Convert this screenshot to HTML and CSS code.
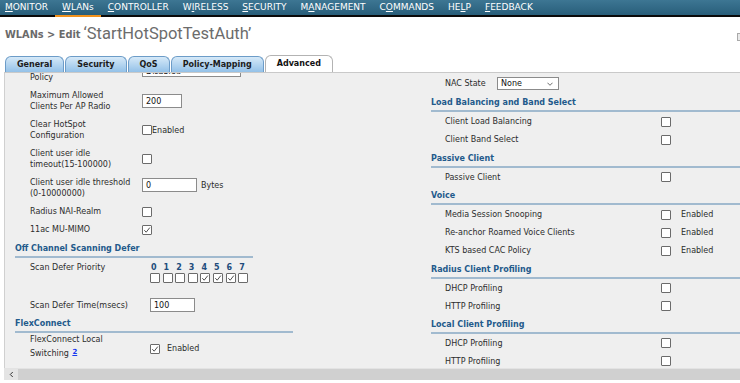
FILE: index.html
```html
<!DOCTYPE HTML>
<html>
<head>
<meta charset="utf-8" />
<title>WLANs &gt; Edit</title>
<link rel="stylesheet" href="styles.css">
</head>

<body>
<div class="nav">
	<span class="item first"><u>M</u>ONITOR</span>
	<span class="item on"><u>W</u>LANs</span>
	<span class="item"><u>C</u>ONTROLLER</span>
	<span class="item">W<u>I</u>RELESS</span>
	<span class="item"><u>S</u>ECURITY</span>
	<span class="item">M<u>A</u>NAGEMENT</span>
	<span class="item">C<u>O</u>MMANDS</span>
	<span class="item">HE<u>L</u>P</span>
	<span class="item"><u>F</u>EEDBACK</span>
</div>

<div class="head">
	<span class="crumb">WLANs &gt; Edit</span>
	<span class="name">‘StartHotSpotTestAuth’</span>
	<span class="back"></span>
</div>

<div class="tabs">
	<span class="tab">General</span>
	<span class="tab">Security</span>
	<span class="tab">QoS</span>
	<span class="tab">Policy-Mapping</span>
	<span class="tab on">Advanced</span>
</div>

<div class="panel">
	<div class="col left">
		<div class="row">
			<span class="lbl">Policy</span>
			<span class="box sel w99 top">Disabled</span>
		</div>
		<div class="row">
			<span class="lbl">Maximum Allowed<br>Clients Per AP Radio</span>
			<span class="box w40">200</span>
		</div>
		<div class="row">
			<span class="lbl">Clear HotSpot<br>Configuration</span>
			<span class="cb"></span><span>Enabled</span>
		</div>
		<div class="row">
			<span class="lbl">Client user idle<br>timeout(15-100000)</span>
			<span class="cb"></span>
		</div>
		<div class="row">
			<span class="lbl">Client user idle threshold<br>(0-10000000)</span>
			<span class="pair">
				<span class="box w55">0</span><span class="unit">Bytes</span>
			</span>
		</div>
		<div class="row">
			<span class="lbl">Radius NAI-Realm</span>
			<span class="cb"></span>
		</div>
		<div class="row">
			<span class="lbl">11ac MU-MIMO</span>
			<span class="cb on"><svg viewBox="0 0 8 8"><polyline points="1.3,4.2 3.2,6.2 6.8,1.6"/></svg></span>
		</div>

		<div class="sec short">Off Channel Scanning Defer</div>
		<div class="row prio-row">
			<span class="lbl wide">Scan Defer Priority</span>
			<div class="prio">
				<b>0</b><b>1</b><b>2</b><b>3</b><b>4</b><b>5</b><b>6</b><b>7</b>
				<span class="cb"></span>
				<span class="cb"></span>
				<span class="cb"></span>
				<span class="cb"></span>
				<span class="cb on"><svg viewBox="0 0 8 8"><polyline points="1.3,4.2 3.2,6.2 6.8,1.6"/></svg></span>
				<span class="cb on"><svg viewBox="0 0 8 8"><polyline points="1.3,4.2 3.2,6.2 6.8,1.6"/></svg></span>
				<span class="cb on"><svg viewBox="0 0 8 8"><polyline points="1.3,4.2 3.2,6.2 6.8,1.6"/></svg></span>
				<span class="cb"></span>
			</div>
		</div>
		<div class="row spaced">
			<span class="lbl wide">Scan Defer Time(msecs)</span>
			<span class="box w45">100</span>
		</div>

		<div class="sec flex">FlexConnect</div>
		<div class="row tall">
			<span class="lbl wide">FlexConnect Local<br>Switching <a class="note">2</a></span>
			<span class="cb on"><svg viewBox="0 0 8 8"><polyline points="1.3,4.2 3.2,6.2 6.8,1.6"/></svg></span>
			<span class="en">Enabled</span>
		</div>
	</div>

	<div class="col right">
		<div class="row">
			<span class="lbl nac">NAC State</span>
			<span class="box sel w62">None<svg viewBox="0 0 7 4"><polyline points="0.5,0.5 3.5,3.5 6.5,0.5"/></svg></span>
		</div>

		<div class="sec">Load Balancing and Band Select</div>
		<div class="row"><span class="lbl">Client Load Balancing</span><span class="cb"></span></div>
		<div class="row"><span class="lbl">Client Band Select</span><span class="cb"></span></div>

		<div class="sec">Passive Client</div>
		<div class="row"><span class="lbl">Passive Client</span><span class="cb"></span></div>

		<div class="sec">Voice</div>
		<div class="row"><span class="lbl">Media Session Snooping</span><span class="cb"></span><span class="en">Enabled</span></div>
		<div class="row"><span class="lbl">Re-anchor Roamed Voice Clients</span><span class="cb"></span><span class="en">Enabled</span></div>
		<div class="row"><span class="lbl">KTS based CAC Policy</span><span class="cb"></span><span class="en">Enabled</span></div>

		<div class="sec">Radius Client Profiling</div>
		<div class="row"><span class="lbl">DHCP Profiling</span><span class="cb"></span></div>
		<div class="row"><span class="lbl">HTTP Profiling</span><span class="cb"></span></div>

		<div class="sec">Local Client Profiling</div>
		<div class="row"><span class="lbl">DHCP Profiling</span><span class="cb"></span></div>
		<div class="row"><span class="lbl">HTTP Profiling</span><span class="cb"></span></div>
	</div>
</div>

<div class="hbar"><span class="arr"><svg viewBox="0 0 6 8"><polyline points="4.5,1 1.5,4 4.5,7"/></svg></span></div>
</body>
</html>
```

FILE: styles.css
```css
* { box-sizing: border-box; }
body { margin: 0; overflow: hidden; background: #fff; font: 8px/11px "DejaVu Sans", Verdana, sans-serif; color: #2c2c2c; }

/* top menu */
.nav { display: flex; height: 17px; background: linear-gradient(#3d7693, #285e7a); border-bottom: 2px solid #0a0a0a; font-size: 9px; line-height: 15px; color: #fff; }
	.nav .item { height: 17px; padding: 0 7px; border-bottom: 2px solid transparent; white-space: nowrap; }
	.nav .first { margin-left: -2px; }
	.nav .on { border-bottom-color: #f2921c; }

/* page title */
.head { display: flex; align-items: center; height: 34px; padding-left: 5px; color: #6a6a6a; white-space: nowrap; }
	.head .crumb { margin-right: 3px; font-size: 9.8px; font-weight: bold; }
	.head .name { font-family: Roboto, "Liberation Sans", Arial, sans-serif; font-size: 16.5px; line-height: 18px; color: #6c6c6c; }
	.head .back { align-self: flex-start; margin: 16px -40px 0 auto; width: 43px; height: 8px; border: 1px solid #a9a9a9; background: #e9e9e9; }

/* tabs */
.tabs { display: flex; align-items: flex-end; gap: 1px; height: 21px; padding-left: 5px; }
	.tabs .tab { height: 16px; padding: 0 11px; border: 1px solid #6c9cc8; border-bottom: 0; border-radius: 6px 6px 0 0; background: linear-gradient(#d6e9f8, #93c1e8); font-weight: bold; line-height: 15px; color: #1c1c1c; }
	.tabs .on { height: 17px; border-color: #b3b3b3; background: #fff; color: #111; }

/* content */
.panel { display: flex; align-items: flex-start; height: 296px; margin-left: 4px; border-top: 1px solid #c9c9c9; border-left: 1px solid #d0d0d0; background: #efefef; overflow: hidden; }
	.left { flex: none; width: 278px; margin: -5px 0 0 10px; }
	.right { flex: 1; margin-left: 138px; }

.row { display: flex; align-items: center; padding: 4px 0 3px 15px; }
	.row .lbl { flex: none; width: 112px; white-space: nowrap; }
	.row .wide { width: 120px; }
	.right .row { padding-left: 14px; }
		.right .row .lbl { width: 216px; }
		.right .row .nac { width: 52px; }
	.row .en { margin-left: 10px; }
	.left .row .en { margin-left: 7px; }
	.row.spaced { margin-top: 8px; }
	.row.tall { padding-top: 0; line-height: 14px; }
		.row.tall .cb, .row.tall .en { margin-top: 4px; }
	.prio-row { align-items: flex-start; }

.sec { padding: 4.4px 0 2px; border-bottom: 2px solid #a1bacf; font-weight: bold; color: #235a8b; white-space: nowrap; }
	.left .sec { padding-top: 5px; }
	.left .sec.flex { padding-top: 3px; }
	.left .short { width: 238px; }

.box { display: flex; align-items: center; flex: none; height: 14px; padding-left: 3px; border: 1px solid #8b8b8b; background: #fff; color: #111; }
	.box.top { align-self: flex-start; align-items: flex-start; height: 15px; margin-top: -10px; padding-top: 3px; }
	.sel { justify-content: space-between; padding-right: 5px; }
	.sel.w62 { height: 13px; }
	.sel svg { width: 6px; height: 4px; fill: none; stroke: #555; stroke-width: 1; }
	.w40 { width: 40px; }
	.w45 { width: 45px; }
	.w55 { width: 55px; }
	.w62 { width: 62px; }
	.w99 { width: 99px; }

.pair { display: flex; align-items: center; align-self: flex-start; margin-top: 1px; }
	.pair .unit { margin-left: 4px; }

.cb { flex: none; width: 10px; height: 10px; border: 1px solid #6b6b6b; border-radius: 1px; background: #fff; }
	.cb svg { display: block; width: 8px; height: 8px; fill: none; stroke: #3a3a3a; stroke-width: 0.9; }

.prio { display: grid; grid-template-columns: repeat(8, 12.6px); }
	.prio b { padding-left: 1px; color: #1f4d7c; }

.note { margin-left: 1px; font-size: 7px; font-weight: bold; color: #1637f0; text-decoration: underline; vertical-align: 2px; line-height: 0; }

/* bottom scroller */
.hbar { display: flex; height: 12px; margin-left: 4px; border-top: 1px solid #e3e3e3; background: #d0d0d0; }
	.hbar .arr { display: flex; align-items: center; justify-content: center; width: 14px; background: #e4e4e4; }
	.hbar svg { width: 5px; height: 7px; fill: none; stroke: #333; stroke-width: 1.2; }
```
